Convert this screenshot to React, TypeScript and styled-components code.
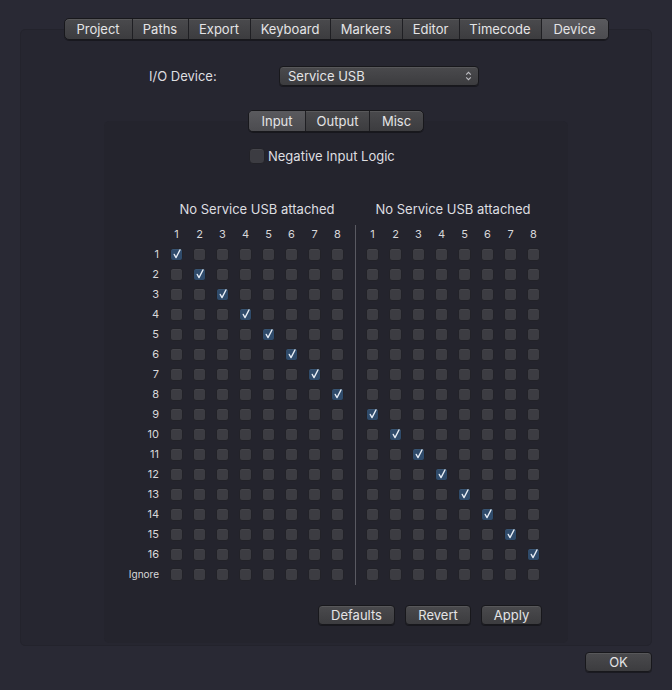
import React from "react";
import styled, { createGlobalStyle, css } from "styled-components";

const GlobalStyle = createGlobalStyle`
  html, body {
    margin: 0;
    padding: 0;
    background: #292934;
  }
  body {
    font-family: Inter, "Noto Sans", "Liberation Sans", sans-serif;
    font-size: 13px;
    color: #dedee0;
    -webkit-font-smoothing: antialiased;
  }
  * { box-sizing: border-box; }
`;

const TABS: [string, number][] = [
  ["Project", 68],
  ["Paths", 56],
  ["Export", 62],
  ["Keyboard", 80],
  ["Markers", 72],
  ["Editor", 57],
  ["Timecode", 82],
  ["Device", 68],
];
const SUB_TABS: [string, number][] = [
  ["Input", 57],
  ["Output", 64],
  ["Misc", 55],
];
const ROWS = [...Array.from({ length: 16 }, (_, i) => String(i + 1)), "Ignore"];
const COLS = Array.from({ length: 8 }, (_, i) => i + 1);

const Window = styled.div`
  width: 672px;
  height: 690px;
  padding: 18px 20px 0;
  display: flex;
  flex-direction: column;
  background: #292934;
`;

const TabView = styled.div`
  display: flex;
  flex-direction: column;
`;

const buttonFace = css`
  background: linear-gradient(#4a4a4d, #3c3c3f);
  border: 1px solid #18181c;
  box-shadow: inset 0 1px 0 rgba(255, 255, 255, 0.08), 0 1px 0 rgba(0, 0, 0, 0.35);
  color: #e4e4e6;
`;

const Segmented = styled.div<{ $height: number }>`
  align-self: center;
  display: flex;
  height: ${(p) => p.$height}px;
  border-radius: 5px;
  overflow: hidden;
  position: relative;
  z-index: 1;
  margin-bottom: -${(p) => Math.round(p.$height / 2)}px;
  ${buttonFace};
`;

const Segment = styled.div<{ $active?: boolean; $width: number }>`
  display: flex;
  align-items: center;
  justify-content: center;
  width: ${(p) => p.$width}px;
  font-size: 13px;
  line-height: 1;
  background: ${(p) => (p.$active ? "linear-gradient(#5a5a5e, #4c4c50)" : "transparent")};
  & + & {
    border-left: 1px solid #1f1f23;
  }
  &:first-child {
    width: ${(p) => p.$width - 1}px;
  }
  &:last-child {
    width: ${(p) => p.$width - 1}px;
  }
`;

const TabPanel = styled.div`
  height: 617px;
  background: #262630;
  border: 1px solid #23232c;
  border-radius: 5px;
  display: flex;
  flex-direction: column;
  padding-top: 36px;
`;

const DeviceRow = styled.div`
  display: flex;
  align-items: center;
  padding-left: 128px;
  height: 20px;
`;

const FieldLabel = styled.label`
  width: 130px;
  font-size: 13px;
`;

const Popup = styled.div`
  width: 200px;
  height: 20px;
  border-radius: 4px;
  display: flex;
  align-items: center;
  justify-content: space-between;
  padding: 0 6px 0 8px;
  ${buttonFace};
`;

const SubTabView = styled.div`
  margin-top: 24px;
  display: flex;
  flex-direction: column;
`;

const SubPanel = styled.div`
  margin: 0 83px;
  height: 522px;
  background: #24242d;
  border-radius: 5px;
  display: flex;
  flex-direction: column;
  padding-top: 27px;
`;

const CheckRow = styled.label`
  display: flex;
  align-items: center;
  gap: 3px;
  padding-left: 145px;
  font-size: 13px;
`;

const Box = styled.span<{ $checked?: boolean; $size: number }>`
  width: ${(p) => p.$size}px;
  height: ${(p) => p.$size}px;
  border-radius: ${(p) => (p.$size > 14 ? 4 : 3)}px;
  border: 1px solid #222228;
  background: ${(p) => (p.$checked ? "#2f4b6b" : "#3c3c42")};
  box-shadow: inset 0 1px 0 rgba(255, 255, 255, 0.05);
  display: flex;
  align-items: center;
  justify-content: center;
  flex: none;
`;

const Matrix = styled.div`
  margin-top: 36px;
  margin-left: 1px;
  display: grid;
  grid-template-columns: 60px repeat(8, 23px) 12px repeat(8, 23px);
  grid-template-rows: 18px 5px 21px repeat(17, 20px);
  align-items: center;
`;

const GroupTitle = styled.div<{ $col: number }>`
  grid-row: 1;
  grid-column: ${(p) => p.$col} / span 8;
  text-align: center;
  font-size: 13px;
`;

const ColNum = styled.div`
  grid-row: 3;
  text-align: center;
  font-size: 11px;
  color: #d8d8da;
`;

const RowLabel = styled.div<{ $small?: boolean }>`
  grid-column: 1;
  text-align: right;
  padding-right: 6px;
  font-size: ${(p) => (p.$small ? 10 : 11)}px;
  color: #d8d8da;
`;

const Cell = styled.div`
  display: flex;
  justify-content: center;
`;

const Divider = styled.div`
  grid-column: 10;
  grid-row: 3 / span 18;
  justify-self: center;
  align-self: stretch;
  margin-top: 2px;
  margin-bottom: -1px;
  width: 1px;
  background: #5a5a62;
`;

const ButtonRow = styled.div`
  margin-top: 21px;
  display: flex;
  justify-content: flex-end;
  gap: 10px;
  padding-right: 26px;
`;

const PushButton = styled.button<{ $width: number }>`
  width: ${(p) => p.$width}px;
  height: 20px;
  border-radius: 4px;
  font-family: inherit;
  font-size: 13px;
  padding: 0;
  ${buttonFace};
`;

const Footer = styled.div`
  display: flex;
  justify-content: flex-end;
  margin-top: 6px;
`;

const Check = () => (
  <svg width="10" height="10" viewBox="0 0 10 10">
    <path d="M2.2 5.4 L4.0 8.6 L8.0 0.9" fill="none" stroke="#e8eef6" strokeWidth="1.3" strokeLinecap="round" strokeLinejoin="round" />
  </svg>
);

const UpDown = () => (
  <svg width="7" height="10" viewBox="0 0 7 10">
    <path d="M1.2 3.6 L3.5 1.3 L5.8 3.6 M1.2 6.4 L3.5 8.7 L5.8 6.4" fill="none" stroke="#bdbdc2" strokeWidth="1.1" />
  </svg>
);

function isChecked(row: number, group: number, col: number) {
  // inputs 1-8 map to the first device, 9-16 to the second
  if (row >= 16) return false;
  return Math.floor(row / 8) === group && row % 8 === col;
}

export default function App() {
  return (
    <>
      <GlobalStyle />
      <Window>
        <TabView>
          <Segmented $height={22}>
            {TABS.map(([t, w]) => (
              <Segment key={t} $width={w} $active={t === "Device"}>
                {t}
              </Segment>
            ))}
          </Segmented>
          <TabPanel>
            <DeviceRow>
              <FieldLabel>I/O Device:</FieldLabel>
              <Popup>
                <span>Service USB</span>
                <UpDown />
              </Popup>
            </DeviceRow>
            <SubTabView>
              <Segmented $height={22}>
                {SUB_TABS.map(([t, w]) => (
                  <Segment key={t} $width={w} $active={t === "Input"}>
                    {t}
                  </Segment>
                ))}
              </Segmented>
              <SubPanel>
                <CheckRow>
                  <Box $size={16} />
                  Negative Input Logic
                </CheckRow>
                <Matrix>
                  <GroupTitle $col={2}>No Service USB attached</GroupTitle>
                  <GroupTitle $col={11}>No Service USB attached</GroupTitle>
                  {[0, 1].map((g) =>
                    COLS.map((c) => (
                      <ColNum key={`h${g}${c}`} style={{ gridColumn: 2 + g * 9 + (c - 1) }}>
                        {c}
                      </ColNum>
                    ))
                  )}
                  <Divider />
                  {ROWS.map((r, ri) => (
                    <React.Fragment key={r}>
                      <RowLabel $small={r === "Ignore"} style={{ gridRow: 4 + ri }}>
                        {r}
                      </RowLabel>
                      {[0, 1].map((g) =>
                        COLS.map((c) => {
                          const on = isChecked(ri, g, c - 1);
                          return (
                            <Cell key={`${g}${c}`} style={{ gridRow: 4 + ri, gridColumn: 2 + g * 9 + (c - 1) }}>
                              <Box $size={13} $checked={on}>
                                {on && <Check />}
                              </Box>
                            </Cell>
                          );
                        })
                      )}
                    </React.Fragment>
                  ))}
                </Matrix>
                <ButtonRow>
                  <PushButton $width={77}>Defaults</PushButton>
                  <PushButton $width={66}>Revert</PushButton>
                  <PushButton $width={61}>Apply</PushButton>
                </ButtonRow>
              </SubPanel>
            </SubTabView>
          </TabPanel>
        </TabView>
        <Footer>
          <PushButton $width={67}>OK</PushButton>
        </Footer>
      </Window>
    </>
  );
}
